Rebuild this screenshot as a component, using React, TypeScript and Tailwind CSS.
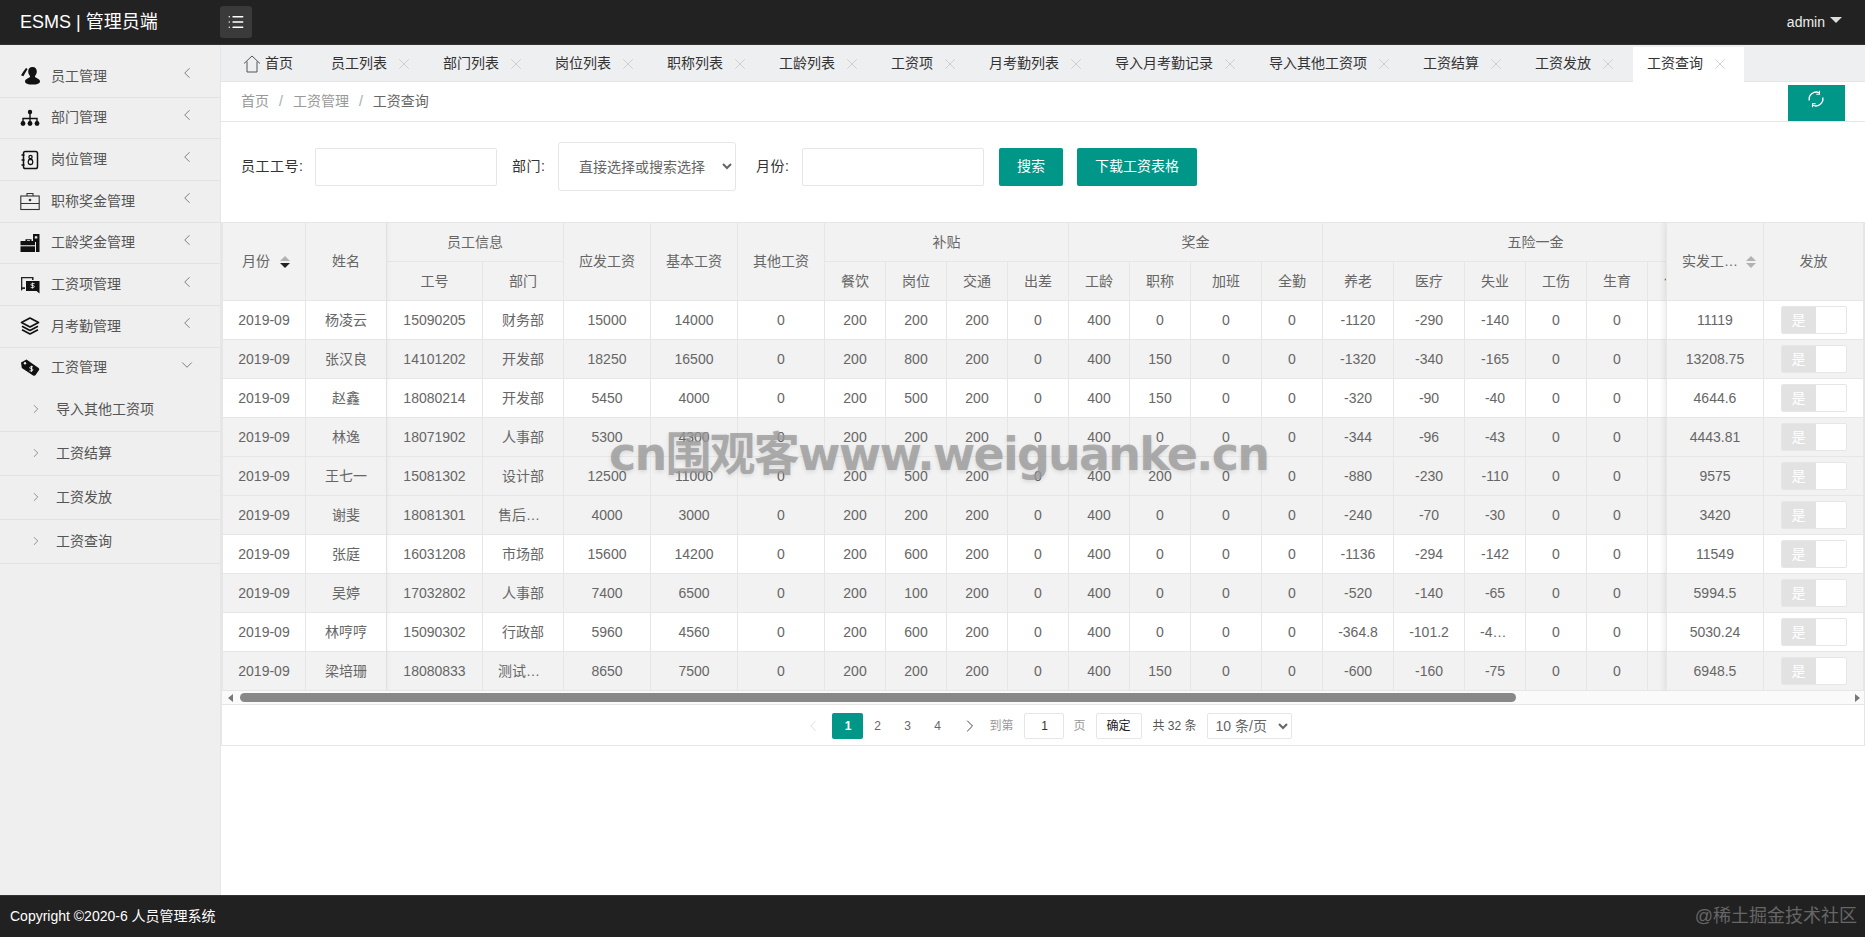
import { ChevronDown, ChevronLeft, ChevronRight, List, X } from "lucide-react";
import type { ReactNode } from "react";

const UsersIcon = () => (
  <svg width="20" height="20" viewBox="0 0 20 20" fill="#111">
    <path d="M12.500 1c2.800 0 4.300 2 4.300 4.500 0 1.900-.8 3.500-1.800 4.400-.3 1 .4 1.500 1.600 2 1.900.8 3.400 1.700 3.400 3.500 0 2.100-3.400 3.100-7.500 3.100S5 17.500 5 15.400c0-1.800 1.500-2.700 3.400-3.500 1.200-.5 1.900-1 1.600-2-1-.9-1.800-2.500-1.800-4.400C8.200 3 9.700 1 12.500 1z" />
    <path d="M6 2 7.600 3C6.200 5.300 4.800 7.800 3.400 10.300L1 9.200C2.500 6.600 4.200 4.200 6 2z" />
  </svg>
);

const SitemapIcon = () => (
  <svg width="20" height="20" viewBox="0 0 20 20" fill="#111" stroke="#111">
    <circle cx="10" cy="4" r="2.200" stroke="none" />
    <circle cx="3" cy="15.500" r="2.400" stroke="none" />
    <circle cx="10" cy="15.500" r="2.400" stroke="none" />
    <circle cx="17" cy="15.500" r="2.400" stroke="none" />
    <path d="M10 5v9M3 14v-3.500h14V14" fill="none" strokeWidth="1.400" />
  </svg>
);

const BookIcon = () => (
  <svg width="20" height="20" viewBox="0 0 20 20" fill="none" stroke="#111">
    <rect x="3.500" y="1.500" width="14" height="17" rx="1.800" strokeWidth="1.500" />
    <path d="M1.500 5h3M1.500 10h3M1.500 15h3" strokeWidth="1.400" />
    <circle cx="10.500" cy="7" r="1.600" strokeWidth="1.300" />
    <rect x="8.300" y="9.500" width="4.400" height="5" rx="1.800" strokeWidth="1.300" />
  </svg>
);

const CaseIcon = () => (
  <svg width="20" height="20" viewBox="0 0 20 20" fill="none" stroke="#333" strokeWidth="1.100">
    <rect x="0.800" y="5" width="18.400" height="13.500" />
    <path d="M7 5V2.500h6V5M0.800 12.500h18.400" />
    <circle cx="10" cy="9" r="0.800" fill="#333" />
  </svg>
);

const SeniorityIcon = () => (
  <svg width="20" height="20" viewBox="0 0 20 20" fill="#111">
    <path d="M13 1h6.500v18H16V9h-3zM14.800 3.200v2.300h2.500V3.200z" fillRule="evenodd" />
    <path d="M5.500 8V6.200h6V8h3.500v4.300H.5V8zM7 8h3V7.300H7z" fillRule="evenodd" />
    <path d="M.5 13.300H15V19H.5z" />
  </svg>
);

const BubbleIcon = () => (
  <svg width="20" height="20" viewBox="0 0 20 20">
    <path d="M1 2h12.500v3H12V3.300H2.300v9H5V14H3L1 16z" fill="#222" />
    <path d="M6 6h13.500v12.500l-3-2.500H6z" fill="#111" />
    <path d="M14.500 8.600h-2.600c-1.200 0-1.200 2 0 2h1.500c1.200 0 1.200 2 0 2h-2.700M12.600 7.600v6" stroke="#fff" strokeWidth="0.800" fill="none" />
  </svg>
);

const LayersIcon = () => (
  <svg width="20" height="20" viewBox="0 0 20 20" fill="none" stroke="#111" strokeWidth="1.700" strokeLinejoin="round">
    <path d="M10 2 18.500 6.500 10 11 1.500 6.500z" />
    <path d="M2 10.200 10 14.500l8-4.300" />
    <path d="M2 13.800 10 18l8-4.200" />
  </svg>
);

const TagIcon = () => (
  <svg width="20" height="20" viewBox="0 0 20 20">
    <path d="M1 4.500 6.500 1.500l11.800 8.200c1 .7 1.200 1.700.6 2.600l-3.300 4.700c-.6.800-1.600 1-2.500.4L1.800 10z" fill="#111" />
    <circle cx="5" cy="5.200" r="1.200" fill="#eee" />
    <path d="M13 8.800h-2.400c-1 0-1.200 1.800 0 1.900l1.500.2c1.200.2 1 2-.2 2H9.500M11.500 7.800v6" stroke="#fff" strokeWidth="0.900" fill="none" />
  </svg>
);

const HomeIcon = () => (
  <svg width="18" height="18" viewBox="0 0 18 18" fill="none" stroke="#555" strokeWidth="1">
    <path d="M1 8.500 9 1l8 7.500M4 6.500V17h10V6.500" />
  </svg>
);

const RefreshIcon = () => (
  <svg width="18" height="18" viewBox="0 0 18 18" fill="none" stroke="#fff" strokeWidth="1.400">
    <path d="M2.300 10.500A7 7 0 0 1 12.500 3" />
    <path d="M15.700 7.500A7 7 0 0 1 5.500 15" />
    <path d="M12.500 .8v3.400H9.300" strokeWidth="1.100" />
    <path d="M5.500 17.200v-3.400h3.200" strokeWidth="1.100" />
  </svg>
);

const menus: { label: string; icon: ReactNode }[] = [
  { label: "员工管理", icon: <UsersIcon /> },
  { label: "部门管理", icon: <SitemapIcon /> },
  { label: "岗位管理", icon: <BookIcon /> },
  { label: "职称奖金管理", icon: <CaseIcon /> },
  { label: "工龄奖金管理", icon: <SeniorityIcon /> },
  { label: "工资项管理", icon: <BubbleIcon /> },
  { label: "月考勤管理", icon: <LayersIcon /> },
];

const subMenus = ["导入其他工资项", "工资结算", "工资发放", "工资查询"];

const tabs = [
  "员工列表",
  "部门列表",
  "岗位列表",
  "职称列表",
  "工龄列表",
  "工资项",
  "月考勤列表",
  "导入月考勤记录",
  "导入其他工资项",
  "工资结算",
  "工资发放",
];

const colWidths = [
  "w-[83px]", "w-[81px]", "w-[96px]", "w-[81px]", "w-[87px]", "w-[87px]", "w-[87px]",
  "w-[61px]", "w-[61px]", "w-[61px]", "w-[61px]", "w-[61px]", "w-[61px]", "w-[71px]", "w-[61px]",
  "w-[71px]", "w-[71px]", "w-[61px]", "w-[61px]", "w-[61px]", "w-[61px]", "w-[40px]",
];

const rows: { c: (string | number)[]; net: string | number; hover?: boolean }[] = [
  { c: ["杨凌云", 15090205, "财务部", 15000, 14000, 0, 200, 200, 200, 0, 400, 0, 0, 0, -1120, -290, -140, 0, 0], net: 11119 },
  { c: ["张汉良", 14101202, "开发部", 18250, 16500, 0, 200, 800, 200, 0, 400, 150, 0, 0, -1320, -340, -165, 0, 0], net: 13208.75 },
  { c: ["赵鑫", 18080214, "开发部", 5450, 4000, 0, 200, 500, 200, 0, 400, 150, 0, 0, -320, -90, -40, 0, 0], net: 4644.6 },
  { c: ["林逸", 18071902, "人事部", 5300, 4300, 0, 200, 200, 200, 0, 400, 0, 0, 0, -344, -96, -43, 0, 0], net: 4443.81 },
  { c: ["王七一", 15081302, "设计部", 12500, 11000, 0, 200, 500, 200, 0, 400, 200, 0, 0, -880, -230, -110, 0, 0], net: 9575, hover: true },
  { c: ["谢斐", 18081301, "售后服务部", 4000, 3000, 0, 200, 200, 200, 0, 400, 0, 0, 0, -240, -70, -30, 0, 0], net: 3420 },
  { c: ["张庭", 16031208, "市场部", 15600, 14200, 0, 200, 600, 200, 0, 400, 0, 0, 0, -1136, -294, -142, 0, 0], net: 11549 },
  { c: ["吴婷", 17032802, "人事部", 7400, 6500, 0, 200, 100, 200, 0, 400, 0, 0, 0, -520, -140, -65, 0, 0], net: 5994.5 },
  { c: ["林哼哼", 15090302, "行政部", 5960, 4560, 0, 200, 600, 200, 0, 400, 0, 0, 0, -364.8, -101.2, -45.6, 0, 0], net: 5030.24 },
  { c: ["梁培珊", 18080833, "测试开发部", 8650, 7500, 0, 200, 200, 200, 0, 400, 150, 0, 0, -600, -160, -75, 0, 0], net: 6948.5 },
];

const cellCls =
  "h-[39px] overflow-hidden truncate border border-[#e6e6e6] px-[15px] py-0 text-center text-[14px] font-normal text-[#666]";
const headCls = `${cellCls} bg-[#f2f2f2]`;

function SortIcon({ active, className }: { active?: boolean; className: string }) {
  return (
    <span className={`inline-flex shrink-0 flex-col gap-[2px] ${className}`}>
      <span className="h-0 w-0 border-x-[5px] border-b-[5px] border-x-transparent border-b-[#b2b2b2]" />
      <span
        className={`h-0 w-0 border-x-[5px] border-t-[5px] border-x-transparent ${
          active ? "border-t-[#222]" : "border-t-[#b2b2b2]"
        }`}
      />
    </span>
  );
}

function Switch() {
  return (
    <div className="mx-auto flex h-[28px] w-[66px] overflow-hidden rounded-[2px] border border-[#e6e6e6] bg-white">
      <span className="flex w-[34px] items-center justify-center bg-[#e2e2e2] text-[14px] text-white">是</span>
    </div>
  );
}

function SalaryTable() {
  return (
    <div className="relative overflow-hidden">
      <table className="w-[1526px] table-fixed border-collapse">
        <colgroup>
          {colWidths.map((w, i) => (
            <col key={i} className={w} />
          ))}
        </colgroup>
        <thead>
          <tr>
            <th rowSpan={2} className={headCls}>
              <span className="flex items-center pl-[4px]">
                月份
                <SortIcon active className="ml-[10px]" />
              </span>
            </th>
            <th rowSpan={2} className={headCls}>姓名</th>
            <th colSpan={2} className={headCls}>员工信息</th>
            <th rowSpan={2} className={headCls}>应发工资</th>
            <th rowSpan={2} className={headCls}>基本工资</th>
            <th rowSpan={2} className={headCls}>其他工资</th>
            <th colSpan={4} className={headCls}>补贴</th>
            <th colSpan={4} className={headCls}>奖金</th>
            <th colSpan={7} className={headCls}>五险一金</th>
          </tr>
          <tr>
            {["工号", "部门", "餐饮", "岗位", "交通", "出差", "工龄", "职称", "加班", "全勤", "养老", "医疗", "失业", "工伤", "生育", "住房", ""].map(
              (h, i) => (
                <th key={i} className={headCls}>{h}</th>
              ),
            )}
          </tr>
        </thead>
        <tbody>
          {rows.map((r, i) => (
            <tr key={i} className={i % 2 === 1 || r.hover ? "bg-[#f2f2f2]" : "bg-white"}>
              <td className={cellCls}>2019-09</td>
              {r.c.map((v, j) => (
                <td key={j} className={cellCls}>{v}</td>
              ))}
              <td className={cellCls}>0</td>
              <td className={cellCls}>0</td>
            </tr>
          ))}
        </tbody>
      </table>

      {/* fixed left column shadow */}
      <div className="pointer-events-none absolute top-0 bottom-0 left-[164px] w-[5px] bg-gradient-to-r from-black/[0.03] to-transparent" />

      {/* fixed right columns */}
      <div className="absolute top-0 right-0 bg-white shadow-[-2px_0_6px_rgba(0,0,0,0.08)]">
        <table className="w-[197px] table-fixed border-collapse">
          <colgroup>
            <col className="w-[97px]" />
            <col className="w-[100px]" />
          </colgroup>
          <thead>
            <tr>
              <th className={`${headCls} h-[78px] pr-0`}>
                <span className="flex items-center">
                  <span className="w-[58px] truncate text-left">实发工资数</span>
                  <SortIcon className="ml-[6px]" />
                </span>
              </th>
              <th className={`${headCls} h-[78px]`}>发放</th>
            </tr>
          </thead>
          <tbody>
            {rows.map((r, i) => (
              <tr key={i} className={i % 2 === 1 || r.hover ? "bg-[#f2f2f2]" : "bg-white"}>
                <td className={cellCls}>{r.net}</td>
                <td className={`${cellCls} pr-[16px] pl-[16px]`}>
                  <Switch />
                </td>
              </tr>
            ))}
          </tbody>
        </table>
      </div>
    </div>
  );
}

function Pagination() {
  return (
    <div className="flex h-[40px] items-center justify-center pt-[2px] pl-[10px] text-[12px] text-[#666]">
      <ChevronLeft size={18} strokeWidth={1} className="text-[#d2d2d2]" />
      <span className="ml-[10px] flex h-[26px] w-[31px] items-center justify-center rounded-[2px] bg-[#009688] font-bold text-white">1</span>
      <span className="-ml-px w-[30px] text-center">2</span>
      <span className="w-[30px] text-center">3</span>
      <span className="w-[30px] text-center">4</span>
      <ChevronRight size={20} strokeWidth={1.200} className="ml-[8px] text-[#444]" />
      <span className="ml-[9px] text-[#999]">到第</span>
      <span className="ml-[11px] flex h-[26px] w-[40px] items-center justify-center rounded-[2px] border border-[#e6e6e6] text-[#333]">1</span>
      <span className="ml-[9px] text-[#999]">页</span>
      <span className="ml-[10px] flex h-[26px] w-[46px] items-center justify-center rounded-[2px] border border-[#e6e6e6] font-normal text-[#222]">确定</span>
      <span className="ml-[11px] text-[#555]">共 32 条</span>
      <select className="ml-[10px] h-[26px] w-[85px] rounded-[2px] border border-[#e6e6e6] bg-white pl-[4px] text-[14px] text-[#666]">
        <option>10 条/页</option>
      </select>
    </div>
  );
}

export default function App() {
  return (
    <div className="flex h-[937px] w-[1865px] flex-col overflow-hidden bg-white font-['Liberation_Sans','Noto_Sans_CJK_SC',sans-serif] text-[14px]">
      <header className="flex h-[45px] shrink-0 items-center border-b border-[#333] bg-[#222]">
        <div className="w-[220px] pl-[20px] text-[18px] text-white">ESMS | 管理员端</div>
        <button className="flex h-[32px] w-[32px] items-center justify-center rounded-[3px] bg-[#3a3a3a] text-white">
          <List size={18} strokeWidth={1.800} />
        </button>
        <div className="ml-auto flex items-center pr-[23px] text-[14px] text-[#eee]">
          admin
          <span className="mb-[4px] ml-[5px] h-0 w-0 border-x-[6px] border-t-[6px] border-x-transparent border-t-[#ddd]" />
        </div>
      </header>

      <div className="flex min-h-0 flex-1">
        <aside className="w-[221px] shrink-0 border-r border-[#e6e6e6] bg-[#efefef] pt-[11px] text-[#555]">
          {menus.map((m) => (
            <div key={m.label} className="flex h-[41.67px] items-center border-b border-[#e2e2e2] pl-[20px]">
              <span className="flex w-[31px] shrink-0">{m.icon}</span>
              <span>{m.label}</span>
              <ChevronLeft size={18} strokeWidth={1.100} className="absolute left-[178px] -translate-y-[3px] text-[#666]" />
            </div>
          ))}
          <div className="flex h-[40px] items-center pl-[20px]">
            <span className="flex w-[31px] shrink-0">
              <TagIcon />
            </span>
            <span>工资管理</span>
            <ChevronDown size={18} strokeWidth={1.100} className="absolute left-[178px] -translate-y-[3px] text-[#666]" />
          </div>
          {subMenus.map((s) => (
            <div key={s} className="flex h-[44px] items-center border-b border-[#e2e2e2] pl-[29px]">
              <ChevronRight size={14} strokeWidth={1.200} className="text-[#666]" />
              <span className="ml-[13px]">{s}</span>
            </div>
          ))}
        </aside>

        <main className="min-w-0 flex-1">
          <div className="flex h-[37px] items-end border-b border-[#e6e6e6] bg-[#eeeff1] text-[14px] text-[#333]">
            <div className="flex h-[34px] w-[95px] items-center pb-[1px] pl-[22px]">
              <HomeIcon />
              <span className="ml-[4px]">首页</span>
            </div>
            {tabs.map((t) => (
              <div key={t} className="flex h-[34px] items-center pb-[1px] pl-[15px]">
                <span className="whitespace-nowrap">{t}</span>
                <span className="flex w-[34px] justify-center text-[#c4c4c4]">
                  <X size={18} strokeWidth={1} />
                </span>
                <span className="w-[7px]" />
              </div>
            ))}
            <div className="-mb-px ml-px flex h-[35px] w-[111px] items-center bg-white pb-[2px] pl-[14px]">
              <span className="whitespace-nowrap">工资查询</span>
              <span className="flex w-[34px] justify-center text-[#c4c4c4]">
                <X size={18} strokeWidth={1} />
              </span>
            </div>
          </div>

          <div className="flex h-[40px] items-center border-b border-[#e6e6e6] pl-[20px] text-[#999]">
            <span>首页</span>
            <span className="mx-[10px] text-[#aaa]">/</span>
            <span>工资管理</span>
            <span className="mx-[10px] text-[#aaa]">/</span>
            <span className="text-[#666]">工资查询</span>
            <div className="mr-[20px] ml-auto flex h-[36px] w-[57px] items-start justify-center self-end bg-[#009688] pt-[5px] pr-[2px] text-white">
              <RefreshIcon />
            </div>
          </div>

          <div className="flex h-[100px] items-start pt-[20px] pl-[20px]">
            <div className="flex h-[49px] items-center text-[#333]">
              <span className="w-[74px] tracking-[0.5px]">员工工号:</span>
              <input className="h-[38px] w-[182px] rounded-[2px] border border-[#e6e6e6]" />
              <span className="ml-[15px] w-[46px] tracking-[0.5px]">部门:</span>
              <select className="h-[49px] w-[178px] rounded-[3px] border border-[#e6e6e6] bg-white pl-[16px] text-[#666]">
                <option>直接选择或搜索选择</option>
              </select>
              <span className="ml-[20px] w-[46px] tracking-[0.5px]">月份:</span>
              <input className="h-[38px] w-[182px] rounded-[2px] border border-[#e6e6e6]" />
              <button className="ml-[15px] h-[38px] w-[64px] rounded-[2px] bg-[#009688] text-white">搜索</button>
              <button className="ml-[14px] h-[38px] w-[120px] rounded-[2px] bg-[#009688] text-white">下载工资表格</button>
            </div>
          </div>

          <div className="relative border border-t-0 border-[#e6e6e6]">
            <SalaryTable />
            <div className="flex h-[14px] items-center border-b border-[#e6e6e6] bg-[#fafafa]">
              <span className="ml-[6px] h-0 w-0 border-y-[4px] border-r-[5px] border-y-transparent border-r-[#777]" />
              <span className="ml-[7px] h-[9px] w-[1276px] rounded-full bg-[#888]" />
              <span className="mr-[4px] ml-auto h-0 w-0 border-y-[4px] border-l-[5px] border-y-transparent border-l-[#777]" />
            </div>
            <Pagination />
            <div className="pointer-events-none absolute top-[204px] left-[387px] font-['DejaVu_Sans','Noto_Sans_CJK_SC',sans-serif] text-[46px] leading-[56px] font-bold tracking-[-1.800px] whitespace-nowrap text-[#9a9a9a]/80 [text-shadow:0_2px_4px_rgba(0,0,0,0.1)]">
              cn围观客www.weiguanke.cn
            </div>
          </div>
        </main>
      </div>

      <footer className="flex h-[42px] shrink-0 items-center justify-between border-t border-[#333] bg-[#212121] pr-[8px] pl-[10px]">
        <span className="text-[14px] text-white">Copyright ©2020-6 人员管理系统</span>
        <span className="text-[18px] text-[#666]">@稀土掘金技术社区</span>
      </footer>
    </div>
  );
}
